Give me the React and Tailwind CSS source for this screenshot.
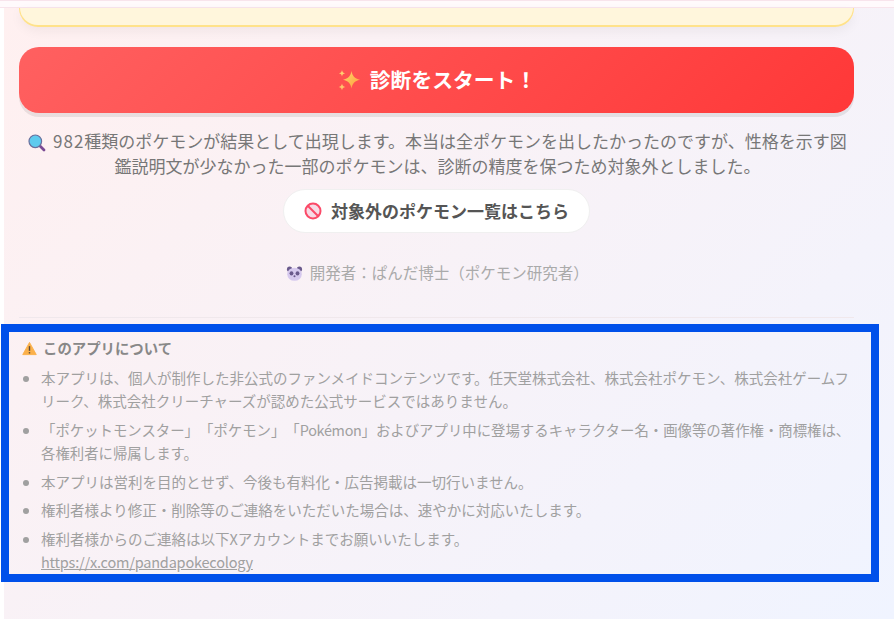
function Sparkles() {
  return (
    <svg viewBox="0 0 24 24" className="h-[24px] w-[24px] shrink-0" aria-hidden="true">
      <defs>
        <linearGradient id="sp" x1="0" y1="0" x2="1" y2="1">
          <stop offset="0" stopColor="#ffd66b" />
          <stop offset="1" stopColor="#ff9d3c" />
        </linearGradient>
      </defs>
      <path fill="url(#sp)" d="M14.5 3c.9 5 2.9 7.3 8.5 8.7-5.6 1.4-7.6 3.7-8.5 8.8-.9-5.1-2.9-7.4-8.5-8.8 5.6-1.4 7.6-3.7 8.5-8.7z" />
      <path fill="#ffcf70" d="M5 2c.4 2 1.100 2.900 3.200 3.300C6.100 5.700 5.400 6.600 5 8.600c-.4-2-1.100-2.900-3.200-3.300C3.900 4.900 4.600 4 5 2z" />
      <path fill="#ffc56a" d="M5 15.500c.4 2.100 1.100 3 3.300 3.400-2.200.4-2.900 1.300-3.300 3.400-.4-2.100-1.100-3-3.300-3.400 2.200-.4 2.900-1.300 3.300-3.400z" />
    </svg>
  );
}

function Magnifier() {
  return (
    <svg viewBox="0 0 18 18" className="-my-[4px] mr-[3px] inline-block h-[18px] w-[18px] align-[0px]" aria-hidden="true">
      <path d="M11.500 11.500 16 16" stroke="#7a4a94" strokeWidth="2.800" strokeLinecap="round" />
      <circle cx="7.300" cy="7.300" r="6.300" fill="#5ecbee" stroke="#6a6f9c" strokeWidth="1.200" />
    </svg>
  );
}

function NoEntry() {
  return (
    <svg viewBox="0 0 18 18" className="h-[18px] w-[18px] shrink-0" aria-hidden="true">
      <circle cx="9" cy="9" r="7.500" fill="#f7dbe6" stroke="#fb4a68" strokeWidth="2" />
      <path d="M4 4l10 10" stroke="#fb4a68" strokeWidth="2" />
    </svg>
  );
}

function Panda() {
  return (
    <svg viewBox="0 0 18 18" className="-my-[4px] mr-[3px] inline-block h-[17px] w-[17px] align-[1px]" aria-hidden="true">
      <circle cx="3.800" cy="4.500" r="2.800" fill="#6a5a8c" />
      <circle cx="14.200" cy="4.500" r="2.800" fill="#6a5a8c" />
      <ellipse cx="9" cy="9.800" rx="7.700" ry="7" fill="#d6c9ee" />
      <ellipse cx="5.800" cy="8.800" rx="2" ry="2.300" fill="#6a5a8c" />
      <ellipse cx="12.200" cy="8.800" rx="2" ry="2.300" fill="#6a5a8c" />
      <circle cx="9" cy="12" r="1.100" fill="#6a5a8c" />
    </svg>
  );
}

function Warning() {
  return (
    <svg viewBox="0 0 16 16" className="h-[15px] w-[15px] shrink-0" aria-hidden="true">
      <path d="M8 1.500 15.200 14.500H.8z" fill="#fbb04a" stroke="#fbb04a" strokeLinejoin="round" />
      <path d="M8 5.500v5" stroke="#5a4a3a" strokeWidth="1.500" />
      <circle cx="8" cy="12.500" r=".9" fill="#5a4a3a" />
    </svg>
  );
}

export default function App() {
  return (
    <div className="relative h-[619px] w-[894px] overflow-hidden bg-white font-['Noto_Sans_CJK_JP',sans-serif] [text-spacing-trim:space-all]">
      <div className="h-[8px] border-y border-[#f8e4ec] bg-[#fffafc]" />
      <div className="ml-[4px] h-[611px] bg-[linear-gradient(135deg,#fff0f0,#f0f4ff)] pl-[15px] pr-[40px]">
        <div className="h-[19px] rounded-b-[20px] border-x border-b-2 border-[#ffe28a] bg-[#fff6dc] shadow-[0_4px_12px_rgba(0,0,0,0.05)]" />
        <button className="mt-[20px] flex h-[66px] w-full items-center justify-center gap-[9px] rounded-[20px] bg-[linear-gradient(135deg,#ff6060,#ff3838)] text-[20.8px] font-bold text-white shadow-[0_4px_0_rgba(0,0,0,0.08)]">
          <Sparkles /> 診断をスタート！
        </button>
        <p className="mt-[15px] pl-[2px] text-center text-[17px] leading-[25px] text-[#777777]">
          <Magnifier /> <span className="tracking-[1px]">982</span>種類のポケモンが結果として出現します。本当は全ポケモンを出したかったのですが、性格を示す図鑑説明文が少なかった一部のポケモンは、診断の精度を保つため対象外としました。
        </p>
        <div className="mt-[11px] flex justify-center">
          <a className="flex h-[44px] w-[307px] items-center justify-center gap-[9px] rounded-full border border-[#f0f0f0] bg-white text-[17px] font-bold text-[#555555]">
            <NoEntry /> 対象外のポケモン一覧はこちら
          </a>
        </div>
        <p className="mt-[27px] pl-[2px] text-center text-[15.5px] leading-[24px] text-[#aaaaaa]"><Panda /> 開発者：ぱんだ博士（ポケモン研究者）</p>
        <div className="mt-[33px] border-t border-[#f0e8ec] pl-[3px] pt-[20px]">
          <h3 className="flex items-center gap-[6px] text-[14.4px] font-bold leading-[20px] text-[#888888]"><Warning /> このアプリについて</h3>
          <ul className="mt-[8px] flex list-disc flex-col gap-[5.8px] pl-[19px] text-[14.5px] leading-[23px] text-[#a0a0a0]">
            <li>本アプリは、個人が制作した非公式のファンメイドコンテンツです。任天堂株式会社、株式会社ポケモン、株式会社ゲームフリーク、株式会社クリーチャーズが認めた公式サービスではありません。</li>
            <li className="text-[14.4px]">「ポケットモンスター」「ポケモン」「<span className="tracking-[-0.3px]">Pokémon</span>」およびアプリ中に登場するキャラクター名・画像等の著作権・商標権は、各権利者に帰属します。</li>
            <li>本アプリは営利を目的とせず、今後も有料化・広告掲載は一切行いません。</li>
            <li>権利者様より修正・削除等のご連絡をいただいた場合は、速やかに対応いたします。</li>
            <li>権利者様からのご連絡は以下Xアカウントまでお願いいたします。<br /><a className="underline tracking-[-0.2px]">https://x.com/pandapokecology</a></li>
          </ul>
        </div>
      </div>
      <div className="pointer-events-none absolute left-[1px] top-[324px] h-[258px] w-[878px] border-[8px] border-[#0050ea]" />
    </div>
  );
}
